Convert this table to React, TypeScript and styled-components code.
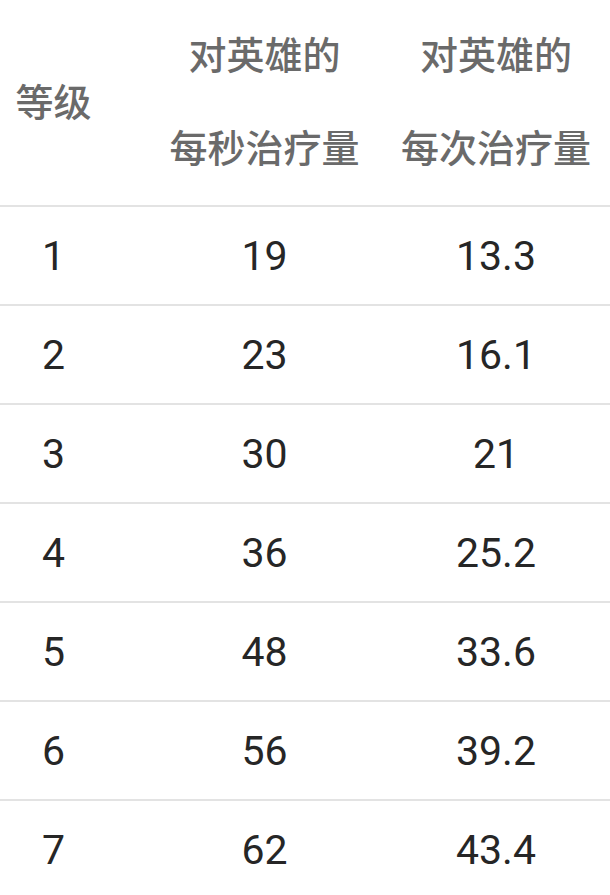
import React from "react";
import styled, { createGlobalStyle } from "styled-components";

const GlobalStyle = createGlobalStyle`
  html, body {
    margin: 0;
    padding: 0;
    background: #ffffff;
    overflow: hidden;
  }
  body {
    width: 610px;
    height: 895px;
  }
`;

const Table = styled.div`
  width: 610px;
  display: flex;
  flex-direction: column;
  background: #ffffff;
`;

const HeaderRow = styled.div`
  display: grid;
  grid-template-columns: 107px 293px 210px;
  height: 207px;
  box-sizing: border-box;
  padding: 6px 0 13px;
  border-bottom: 2px solid #e3e3e3;
`;

const Row = styled.div`
  display: grid;
  grid-template-columns: 107px 293px 210px;
  height: 99px;
  box-sizing: border-box;
  border-bottom: 2px solid #e3e3e3;
`;

const HeadCell = styled.div<{ $col: number }>`
  display: flex;
  align-items: center;
  justify-content: center;
  text-align: center;
  white-space: nowrap;
  padding-left: ${(p) => (p.$col === 1 ? "22px" : "0")};
  padding-right: ${(p) => (p.$col === 2 ? "18px" : "0")};
  font-family: "Noto Sans CJK SC", "Noto Sans", sans-serif;
  font-size: 38px;
  font-weight: 500;
  line-height: 93px;
  color: #6a6a6a;
`;

const Cell = styled.div<{ $col: number }>`
  display: flex;
  align-items: center;
  justify-content: center;
  white-space: nowrap;
  padding-left: ${(p) => (p.$col === 1 ? "22px" : "0")};
  padding-right: ${(p) => (p.$col === 2 ? "18px" : "0")};
  font-family: Roboto, "Liberation Sans", sans-serif;
  font-size: 41px;
  font-weight: 400;
  color: #262626;
`;

const rows: [string, string, string][] = [
  ["1", "19", "13.3"],
  ["2", "23", "16.1"],
  ["3", "30", "21"],
  ["4", "36", "25.2"],
  ["5", "48", "33.6"],
  ["6", "56", "39.2"],
  ["7", "62", "43.4"],
];

export default function App() {
  return (
    <>
      <GlobalStyle />
      <Table>
        <HeaderRow>
          <HeadCell $col={0}>等级</HeadCell>
          <HeadCell $col={1}>
            对英雄的
            <br />
            每秒治疗量
          </HeadCell>
          <HeadCell $col={2}>
            对英雄的
            <br />
            每次治疗量
          </HeadCell>
        </HeaderRow>
        {rows.map((r) => (
          <Row key={r[0]}>
            {r.map((v, i) => (
              <Cell key={i} $col={i}>
                {v}
              </Cell>
            ))}
          </Row>
        ))}
      </Table>
    </>
  );
}
